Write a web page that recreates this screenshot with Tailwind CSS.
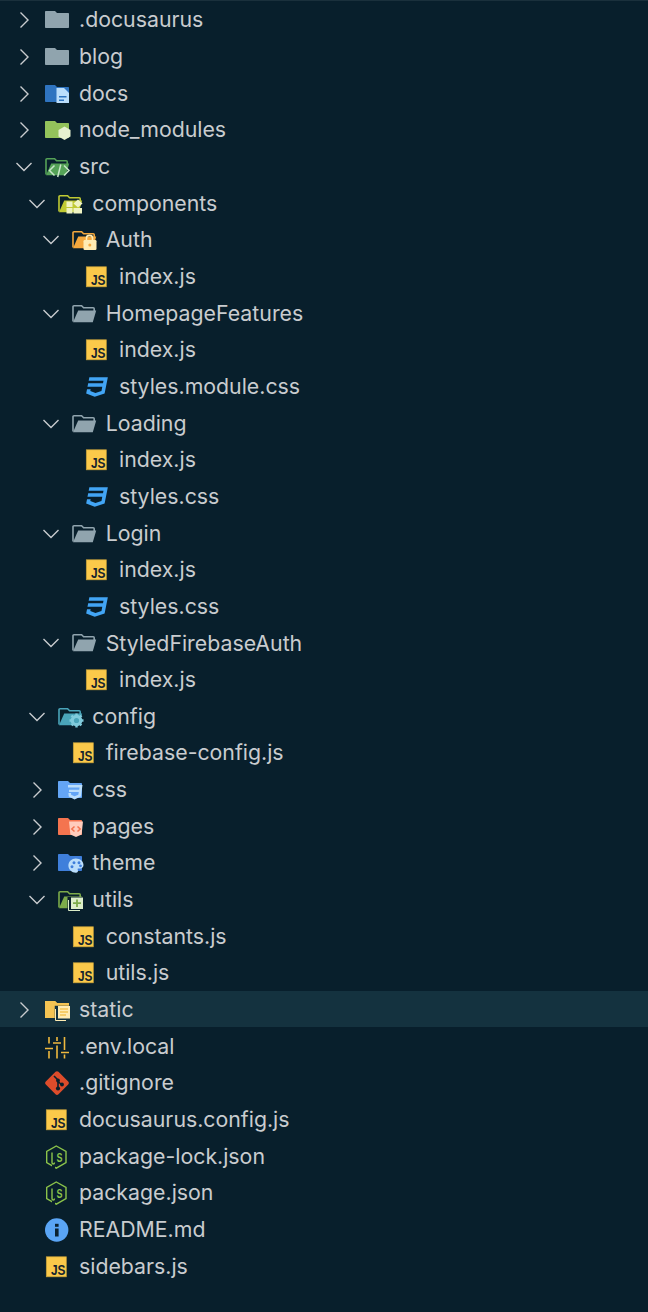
<!DOCTYPE html>
<html lang="en">
<head>
  <meta charset="UTF-8" />
  <title>Explorer</title>
  <script src="https://cdn.jsdelivr.net/npm/@tailwindcss/browser@4"></script>
</head>
<body class="h-[1312px] overflow-hidden bg-[#081f2c] text-[21.3px] text-[#c9cccf] [font-family:Inter,sans-serif]">

  <svg class="absolute h-0 w-0" aria-hidden="true">
    <defs>
      <path id="closed" d="M0 4C0 3.4 0.5 3 1 3H10L12 5H23C23.6 5 24 5.4 24 6V19C24 19.6 23.6 20 23 20H1C0.5 20 0 19.6 0 19Z" />
      <g id="open">
        <path fill="none" stroke="currentColor" stroke-width="1.6" d="M1 19.5V4.8C1 4.2 1.4 3.8 2 3.8H9.6L11.6 5.8H21.2C21.8 5.8 22.2 6.2 22.2 6.8V9" />
        <path fill="currentColor" d="M6.2 8.6H24.2L20.8 20.2H1Z" />
      </g>
      <g id="js">
        <rect x="1.3" y="1.8" width="20" height="20" fill="#fbc94a" stroke="#c8a23a" stroke-width="0.7" />
        <text x="20.4" y="20.4" text-anchor="end" textLength="14.5" lengthAdjust="spacingAndGlyphs" font-family="Liberation Sans" font-weight="700" font-size="14" fill="#16242e">JS</text>
      </g>
      <path id="css" d="M5 3L4.35 6.34H17.94L17.5 8.5H3.92L3.26 11.83H16.85L16.09 15.64L10.61 17.45L5.86 15.64L6.19 14H2.85L2.06 18L9.91 21L18.96 18L20.16 11.97L20.4 10.76L21.94 3H5Z" />
      <g id="nodejs">
        <path fill="none" stroke="#8bc34a" stroke-width="1.4" d="M11.3 1L21 6.5V17.5L11.3 23.2L1.7 17.5V6.5Z" />
        <path fill="#081f2c" d="M7 19H10V24H7Z" />
        <path fill="none" stroke="#8bc34a" stroke-width="1.4" d="M7 7.5V17.5C7 19.5 9.5 19.5 9.5 17.5" />
        <text x="17.5" y="16.5" text-anchor="end" textLength="6" lengthAdjust="spacingAndGlyphs" font-family="Liberation Sans" font-weight="700" font-size="12" fill="#8bc34a">S</text>
      </g>
      <path id="right" fill="none" stroke="currentColor" stroke-width="1.4" d="M8.5 4.5L16 12L8.5 19.5" />
      <path id="down" fill="none" stroke="currentColor" stroke-width="1.4" d="M4.5 8L12 15.5L19.5 8" />
    </defs>
  </svg>

  <div class="border-t border-[#1a303c]">

    <div class="flex h-[36.67px] items-center pt-[2px] pl-[12px]">
      <svg class="mr-[9px] h-6 w-6"><use href="#right" /></svg>
      <svg class="mr-[10px] h-6 w-6 overflow-visible" fill="#90a4ae"><use href="#closed" /></svg>
      <span>.docusaurus</span>
    </div>
    <div class="flex h-[36.67px] items-center pt-[2px] pl-[12px]">
      <svg class="mr-[9px] h-6 w-6"><use href="#right" /></svg>
      <svg class="mr-[10px] h-6 w-6 overflow-visible" fill="#90a4ae"><use href="#closed" /></svg>
      <span>blog</span>
    </div>
    <div class="flex h-[36.67px] items-center pt-[2px] pl-[12px]">
      <svg class="mr-[9px] h-6 w-6"><use href="#right" /></svg>
      <svg class="mr-[10px] h-6 w-6 overflow-visible" fill="#2f74c0">
        <use href="#closed" />
        <path fill="#bbdefb" d="M11.5 6H19L24 11V21H11.5Z" />
        <path fill="#2f74c0" d="M14 14H21.5V15.6H14ZM14 17.4H19V19H14Z" />
      </svg>
      <span>docs</span>
    </div>
    <div class="flex h-[36.67px] items-center pt-[2px] pl-[12px]">
      <svg class="mr-[9px] h-6 w-6"><use href="#right" /></svg>
      <svg class="mr-[10px] h-6 w-6 overflow-visible" fill="#93c35b">
        <use href="#closed" />
        <path fill="#e6f2d0" d="M19.5 8.5L25.5 12V18.5L19.5 22L13.5 18.5V12Z" />
      </svg>
      <span>node_modules</span>
    </div>
    <div class="flex h-[36.67px] items-center pt-[2px] pl-[12px]">
      <svg class="mr-[9px] h-6 w-6"><use href="#down" /></svg>
      <svg class="mr-[10px] h-6 w-6 overflow-visible text-[#55a257]">
        <use href="#open" />
        <path fill="none" stroke="#c8e6c9" stroke-width="1.5" d="M9.5 10.5L4.5 15.5L9.5 20.5M19 10.5L24 15.5L19 20.5M15.8 9.5L12.7 22" />
      </svg>
      <span>src</span>
    </div>

    <div class="flex h-[36.67px] items-center pt-[2px] pl-[25.33px]">
      <svg class="mr-[9px] h-6 w-6"><use href="#down" /></svg>
      <svg class="mr-[10px] h-6 w-6 overflow-visible text-[#c0ca33]">
        <use href="#open" />
        <path fill="#f0f4c3" d="M8.5 9.5H14.5V15H8.5ZM8.5 16H14.5V21.5H8.5ZM15.5 16H24V21.5H15.5Z" />
        <path fill="#f0f4c3" d="M20 7.5L24.5 11.5L20 15.5L15.5 11.5Z" />
      </svg>
      <span>components</span>
    </div>

    <div class="flex h-[36.67px] items-center pt-[2px] pl-[38.67px]">
      <svg class="mr-[9px] h-6 w-6"><use href="#down" /></svg>
      <svg class="mr-[10px] h-6 w-6 overflow-visible text-[#f4a83d]">
        <use href="#open" />
        <path fill="none" stroke="#ffecb3" stroke-width="1.6" d="M14.5 12.5V10C14.5 6.5 20.5 6.5 20.5 10V12.5" />
        <rect x="11.5" y="12" width="13" height="10" rx="1.2" fill="#ffecb3" />
        <circle cx="17.8" cy="17" r="1.5" fill="#f4a83d" />
      </svg>
      <span>Auth</span>
    </div>
    <div class="flex h-[36.67px] items-center pt-[2px] pl-[52px]">
      <div class="mr-[9px] w-6"></div>
      <svg class="mr-[10px] h-6 w-6"><use href="#js" /></svg>
      <span>index.js</span>
    </div>

    <div class="flex h-[36.67px] items-center pt-[2px] pl-[38.67px]">
      <svg class="mr-[9px] h-6 w-6"><use href="#down" /></svg>
      <svg class="mr-[10px] h-6 w-6 overflow-visible text-[#90a4ae]"><use href="#open" /></svg>
      <span>HomepageFeatures</span>
    </div>
    <div class="flex h-[36.67px] items-center pt-[2px] pl-[52px]">
      <div class="mr-[9px] w-6"></div>
      <svg class="mr-[10px] h-6 w-6"><use href="#js" /></svg>
      <span>index.js</span>
    </div>
    <div class="flex h-[36.67px] items-center pt-[2px] pl-[52px]">
      <div class="mr-[9px] w-6"></div>
      <svg class="mr-[10px] h-6 w-6" viewBox="1 2 22 20" fill="#42a5f5"><use href="#css" /></svg>
      <span>styles.module.css</span>
    </div>

    <div class="flex h-[36.67px] items-center pt-[2px] pl-[38.67px]">
      <svg class="mr-[9px] h-6 w-6"><use href="#down" /></svg>
      <svg class="mr-[10px] h-6 w-6 overflow-visible text-[#90a4ae]"><use href="#open" /></svg>
      <span>Loading</span>
    </div>
    <div class="flex h-[36.67px] items-center pt-[2px] pl-[52px]">
      <div class="mr-[9px] w-6"></div>
      <svg class="mr-[10px] h-6 w-6"><use href="#js" /></svg>
      <span>index.js</span>
    </div>
    <div class="flex h-[36.67px] items-center pt-[2px] pl-[52px]">
      <div class="mr-[9px] w-6"></div>
      <svg class="mr-[10px] h-6 w-6" viewBox="1 2 22 20" fill="#42a5f5"><use href="#css" /></svg>
      <span>styles.css</span>
    </div>

    <div class="flex h-[36.67px] items-center pt-[2px] pl-[38.67px]">
      <svg class="mr-[9px] h-6 w-6"><use href="#down" /></svg>
      <svg class="mr-[10px] h-6 w-6 overflow-visible text-[#90a4ae]"><use href="#open" /></svg>
      <span>Login</span>
    </div>
    <div class="flex h-[36.67px] items-center pt-[2px] pl-[52px]">
      <div class="mr-[9px] w-6"></div>
      <svg class="mr-[10px] h-6 w-6"><use href="#js" /></svg>
      <span>index.js</span>
    </div>
    <div class="flex h-[36.67px] items-center pt-[2px] pl-[52px]">
      <div class="mr-[9px] w-6"></div>
      <svg class="mr-[10px] h-6 w-6" viewBox="1 2 22 20" fill="#42a5f5"><use href="#css" /></svg>
      <span>styles.css</span>
    </div>

    <div class="flex h-[36.67px] items-center pt-[2px] pl-[38.67px]">
      <svg class="mr-[9px] h-6 w-6"><use href="#down" /></svg>
      <svg class="mr-[10px] h-6 w-6 overflow-visible text-[#90a4ae]"><use href="#open" /></svg>
      <span>StyledFirebaseAuth</span>
    </div>
    <div class="flex h-[36.67px] items-center pt-[2px] pl-[52px]">
      <div class="mr-[9px] w-6"></div>
      <svg class="mr-[10px] h-6 w-6"><use href="#js" /></svg>
      <span>index.js</span>
    </div>

    <div class="flex h-[36.67px] items-center pt-[2px] pl-[25.33px]">
      <svg class="mr-[9px] h-6 w-6"><use href="#down" /></svg>
      <svg class="mr-[10px] h-6 w-6 overflow-visible text-[#4aa5ba]">
        <use href="#open" />
        <circle cx="18.5" cy="15.5" r="4.2" fill="none" stroke="#80cbdc" stroke-width="3.2" />
        <path fill="none" stroke="#80cbdc" stroke-width="2.4" d="M18.5 8.5V22.5M11.5 15.5H25.5M13.5 10.5L23.5 20.5M23.5 10.5L13.5 20.5" stroke-dasharray="2.6 8.8" />
      </svg>
      <span>config</span>
    </div>
    <div class="flex h-[36.67px] items-center pt-[2px] pl-[38.67px]">
      <div class="mr-[9px] w-6"></div>
      <svg class="mr-[10px] h-6 w-6"><use href="#js" /></svg>
      <span>firebase-config.js</span>
    </div>

    <div class="flex h-[36.67px] items-center pt-[2px] pl-[25.33px]">
      <svg class="mr-[9px] h-6 w-6"><use href="#right" /></svg>
      <svg class="mr-[10px] h-6 w-6 overflow-visible" fill="#64a5f5">
        <use href="#closed" />
        <path fill="#bbdefb" d="M10 7H24.5L22.8 18.5L16.5 21.5L10.8 18.5L10.4 15H13L13.2 16.8L16.5 18.2L20.3 16.8L20.8 14H11V11.8H21.2L21.6 9.6H10Z" />
      </svg>
      <span>css</span>
    </div>
    <div class="flex h-[36.67px] items-center pt-[2px] pl-[25.33px]">
      <svg class="mr-[9px] h-6 w-6"><use href="#right" /></svg>
      <svg class="mr-[10px] h-6 w-6 overflow-visible" fill="#f4744f">
        <use href="#closed" />
        <path fill="#ffccbc" d="M11 6.5H25L23.6 19.5L18 22L12.4 19.5Z" />
        <path fill="none" stroke="#f4744f" stroke-width="1.5" d="M16.5 11.5L13.8 14L16.5 16.5M19.5 11.5L22.2 14L19.5 16.5" />
      </svg>
      <span>pages</span>
    </div>
    <div class="flex h-[36.67px] items-center pt-[2px] pl-[25.33px]">
      <svg class="mr-[9px] h-6 w-6"><use href="#right" /></svg>
      <svg class="mr-[10px] h-6 w-6 overflow-visible" fill="#3f7fdb">
        <use href="#closed" />
        <path fill="#bbdefb" d="M17.8 7.5C22.2 7.5 25.5 10.4 25.5 14C25.5 16.6 23.4 17.6 21.5 17.6H20.4C19.6 17.6 19.4 18.3 19.8 18.9C20.4 19.8 19.9 21.8 17.8 21.8C13.8 21.8 10.4 18.6 10.4 14.6C10.4 10.6 13.8 7.5 17.8 7.5Z" />
        <path fill="#3f7fdb" d="M14 14.2a1.5 1.5 0 1 0 0.01 0ZM16 10.2a1.5 1.5 0 1 0 0.01 0ZM21 10.2a1.5 1.5 0 1 0 0.01 0ZM22.5 13.4a1.4 1.4 0 1 0 0.01 0Z" />
      </svg>
      <span>theme</span>
    </div>
    <div class="flex h-[36.67px] items-center pt-[2px] pl-[25.33px]">
      <svg class="mr-[9px] h-6 w-6"><use href="#down" /></svg>
      <svg class="mr-[10px] h-6 w-6 overflow-visible text-[#7cab4a]">
        <use href="#open" />
        <path fill="#081f2c" d="M9.5 9H25V24H9.5Z" />
        <path fill="none" stroke="#dcedc8" stroke-width="1" d="M10.5 12V22.5H22" />
        <rect x="13" y="9.5" width="12" height="11.5" fill="#dcedc8" />
        <path fill="none" stroke="#7cab4a" stroke-width="1.8" d="M15 15.2H23M19 11.4V19" />
      </svg>
      <span>utils</span>
    </div>
    <div class="flex h-[36.67px] items-center pt-[2px] pl-[38.67px]">
      <div class="mr-[9px] w-6"></div>
      <svg class="mr-[10px] h-6 w-6"><use href="#js" /></svg>
      <span>constants.js</span>
    </div>
    <div class="flex h-[36.67px] items-center pt-[2px] pl-[38.67px]">
      <div class="mr-[9px] w-6"></div>
      <svg class="mr-[10px] h-6 w-6"><use href="#js" /></svg>
      <span>utils.js</span>
    </div>

    <div class="flex h-[36.67px] items-center bg-[#14323f] pt-[2px] pl-[12px]">
      <svg class="mr-[9px] h-6 w-6"><use href="#right" /></svg>
      <svg class="mr-[10px] h-6 w-6 overflow-visible" fill="#f5c453">
        <use href="#closed" />
        <path fill="#14323f" d="M9.5 7.5H25V24H9.5Z" />
        <path fill="#f5c453" d="M0 3H10L12 5H24V7.5H9.5V20H0Z" />
        <path fill="none" stroke="#ffecb3" stroke-width="1" d="M10.5 11V22.5H21" />
        <rect x="13" y="8" width="12" height="12.5" fill="#ffecb3" />
        <path fill="none" stroke="#f5c453" stroke-width="1.4" d="M15 11H23M15 14H23M15 17H21" />
      </svg>
      <span>static</span>
    </div>

    <div class="flex h-[36.67px] items-center pt-[2px] pl-[12px]">
      <div class="mr-[9px] w-6"></div>
      <svg class="mr-[10px] h-6 w-6 overflow-visible">
        <path fill="none" stroke="#eeb83f" stroke-width="1.6" d="M4 2V8.5M0 13.5H8M4 16V23.5M12 2V6M8 8H16M12 10.5V23.5M19.5 2V15M16 17.5H24M19.5 19.5V23.5" />
      </svg>
      <span>.env.local</span>
    </div>
    <div class="flex h-[36.67px] items-center pt-[2px] pl-[12px]">
      <div class="mr-[9px] w-6"></div>
      <svg class="mr-[10px] h-6 w-6 overflow-visible">
        <path fill="#dd4c2b" d="M10.5 0.8C11.4 -0.1 12.6 -0.1 13.5 0.8L23.2 10.5C24.1 11.4 24.1 12.6 23.2 13.5L13.5 23.2C12.6 24.1 11.4 24.1 10.5 23.2L0.8 13.5C-0.1 12.6 -0.1 11.4 0.8 10.5Z" />
        <path fill="none" stroke="#081f2c" stroke-width="1.6" d="M9 5L13 9V17M13 10.5L17 14" />
        <circle cx="13" cy="9.5" r="1.9" fill="#081f2c" />
        <circle cx="13" cy="17.5" r="2.1" fill="#081f2c" />
        <circle cx="17" cy="13.5" r="1.9" fill="#081f2c" />
      </svg>
      <span>.gitignore</span>
    </div>
    <div class="flex h-[36.67px] items-center pt-[2px] pl-[12px]">
      <div class="mr-[9px] w-6"></div>
      <svg class="mr-[10px] h-6 w-6"><use href="#js" /></svg>
      <span>docusaurus.config.js</span>
    </div>
    <div class="flex h-[36.67px] items-center pt-[2px] pl-[12px]">
      <div class="mr-[9px] w-6"></div>
      <svg class="mr-[10px] h-6 w-6"><use href="#nodejs" /></svg>
      <span>package-lock.json</span>
    </div>
    <div class="flex h-[36.67px] items-center pt-[2px] pl-[12px]">
      <div class="mr-[9px] w-6"></div>
      <svg class="mr-[10px] h-6 w-6"><use href="#nodejs" /></svg>
      <span>package.json</span>
    </div>
    <div class="flex h-[36.67px] items-center pt-[2px] pl-[12px]">
      <div class="mr-[9px] w-6"></div>
      <svg class="mr-[10px] h-6 w-6 overflow-visible">
        <circle cx="11.7" cy="12" r="11.7" fill="#5aa5f5" />
        <rect x="10" y="10.5" width="3.6" height="8" fill="#0b2230" />
        <rect x="10" y="5.8" width="3.6" height="3" fill="#0b2230" />
      </svg>
      <span>README.md</span>
    </div>
    <div class="flex h-[36.67px] items-center pt-[2px] pl-[12px]">
      <div class="mr-[9px] w-6"></div>
      <svg class="mr-[10px] h-6 w-6"><use href="#js" /></svg>
      <span>sidebars.js</span>
    </div>

  </div>
</body>
</html>
